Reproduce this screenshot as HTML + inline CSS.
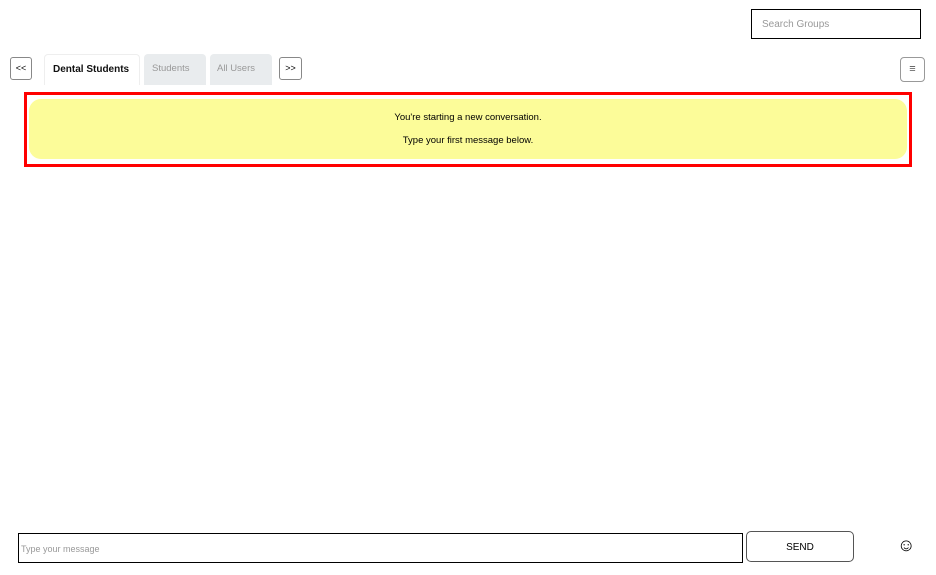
<!DOCTYPE html>
<html><head><style>
body{margin:0;width:936px;height:575px;background:#fff;font-family:"Liberation Sans",Arial,sans-serif;position:relative;overflow:hidden}
.a{position:absolute;box-sizing:border-box}
</style></head><body>
<div class="a" style="left:751px;top:9px;width:170px;height:30px;border:1.5px solid #000;font-size:10px;color:#999;padding:9px 0 0 10px">Search Groups</div>
<div class="a" style="left:10px;top:57px;width:22px;height:23px;border:1px solid #888;border-radius:3px;font-size:9px;text-align:center;line-height:21px">&lt;&lt;</div>
<div class="a" style="left:44px;top:54px;width:96px;height:31px;border:1px solid #eee;border-bottom:none;border-radius:4px 4px 0 0;font-size:10px;font-weight:bold;color:#111;padding:9px 0 0 8px">Dental Students</div>
<div class="a" style="left:144px;top:54px;width:62px;height:31px;background:#e9ecee;border-radius:4px 4px 0 0;font-size:9.5px;color:#999;padding:9px 0 0 8px">Students</div>
<div class="a" style="left:210px;top:54px;width:62px;height:31px;background:#e9ecee;border-radius:4px 4px 0 0;font-size:9.5px;color:#999;padding:9px 0 0 7px">All Users</div>
<div class="a" style="left:279px;top:57px;width:23px;height:23px;border:1px solid #888;border-radius:3px;font-size:9px;text-align:center;line-height:21px">&gt;&gt;</div>
<div class="a" style="left:900px;top:57px;width:25px;height:25px;border:1px solid #999;border-radius:4px;font-size:11px;text-align:center;line-height:23px;color:#555">≡</div>
<div class="a" style="left:24px;top:92px;width:888px;height:75px;border:3px solid #f00"></div>
<div class="a" style="left:29px;top:99px;width:878px;height:60px;background:#fcfc99;border-radius:12px;font-size:9.5px;text-align:center;color:#000">
<div style="margin-top:13px">You're starting a new conversation.</div>
<div style="margin-top:12px">Type your first message below.</div></div>
<div class="a" style="left:18px;top:533px;width:725px;height:30px;border:1px solid #000;font-size:9px;color:#999;padding:10px 0 0 2px">Type your message</div>
<div class="a" style="left:746px;top:531px;width:108px;height:31px;border:1px solid #555;border-radius:5px;font-size:10px;text-align:center;line-height:31px">SEND</div>
<div class="a" style="left:897px;top:535px;font-size:18px;line-height:20px">☺</div>
</body></html>
